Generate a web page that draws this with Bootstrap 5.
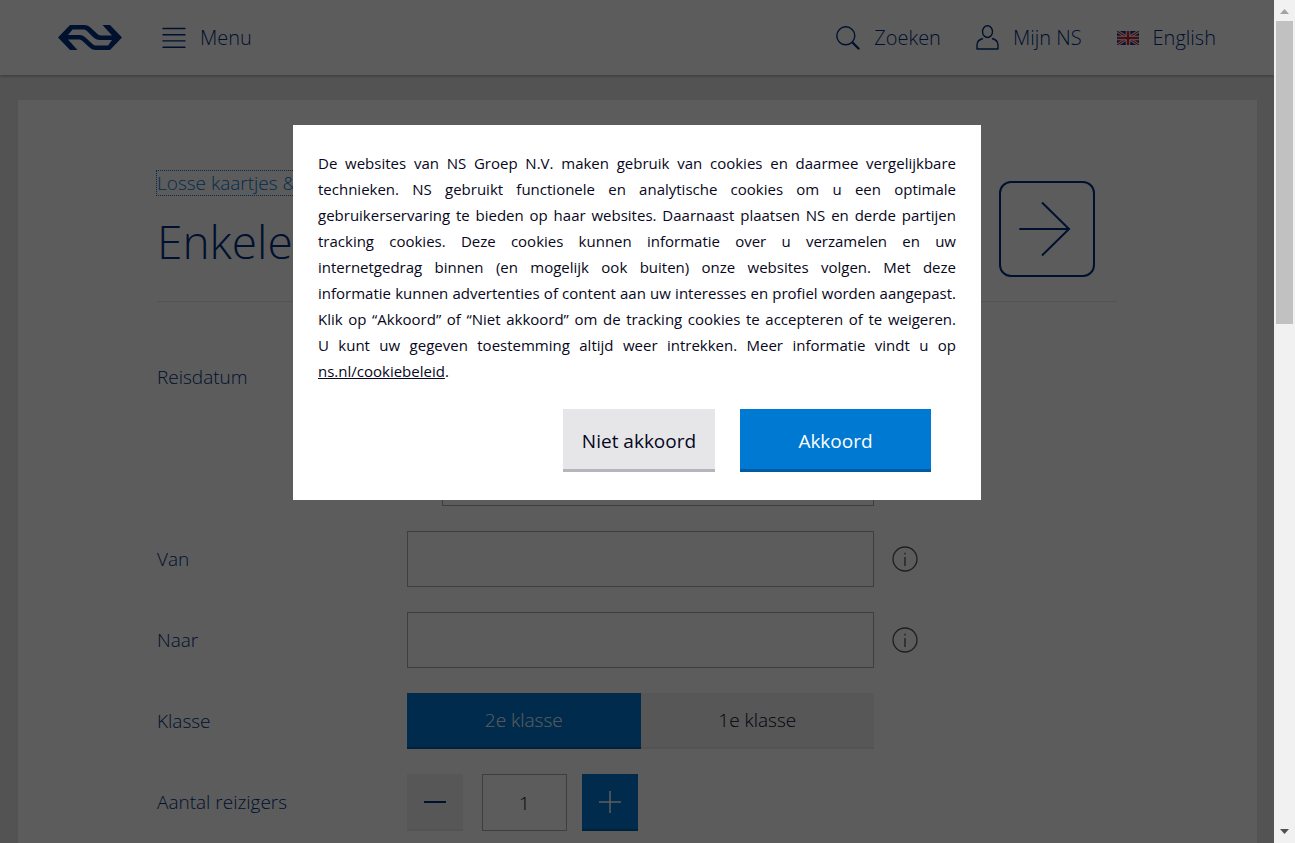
<!DOCTYPE html>
<html lang="nl">
<head>
<meta charset="utf-8">
<meta name="viewport" content="width=device-width, initial-scale=1">
<title>Enkele reis | NS</title>
<link href="https://cdn.jsdelivr.net/npm/bootstrap@5.3.0/dist/css/bootstrap.min.css" rel="stylesheet">
<style>
  :root { --ns-navy: #003082; --ns-blue: #0079d3; --ns-text: #070721; }
  body { font-family: "Open Sans", "Noto Sans", sans-serif; font-weight: 300; font-size: 19px; line-height: 26px; color: var(--ns-text); background: #e6e6e9; }
  svg { display: block; flex: none; }
  .site-header { height: 75px; padding: 0 58px; background: #fff; font-size: 20px; box-shadow: 0 2px 2px rgba(7,7,33,.2); }
  .site-header a { color: var(--ns-navy); text-decoration: none; }
  .main-links { gap: 40px; }
  .user-links { gap: 35px; }
  .icon-gap { gap: 14px; }
  .sheet { margin: 25px 17px 0 18px; background: #fff; padding: 70px 16px 0 15px; }
  .sheet-inner { max-width: 960px; margin: 0 auto; }
  .title-row { height: 132px; border-bottom: 1px solid #e6e6e9; }
  .crumb { color: var(--ns-blue); text-decoration: none; outline: 1px dotted var(--ns-blue); display: inline-block; line-height: 24px; }
  h1 { font-size: 46px; line-height: 60px; font-weight: 300; color: var(--ns-navy); margin: 15px 0 0; }
  .direction { margin: 11px 22px 0 0; width: 96px; height: 96px; padding: 0 4px 0 0; border: 2px solid var(--ns-navy); border-radius: 12px; background: #fff; color: var(--ns-navy); display: grid; place-items: center; }
  .ticket-form { padding-top: 47px; display: grid; gap: 25px; }
  .form-line { display: flex; align-items: flex-start; min-height: 56px; }
  .line-label { width: 250px; flex: none; line-height: 56px; color: var(--ns-navy); }
  .line-field { width: 467px; min-width: 0; }
  .date-field { padding: 101px 0 0 35px; }
  .ns-input { height: 56px; border: 1px solid #adadb3; border-radius: 0; font-size: 19px; font-weight: 300; color: var(--ns-text); }
  .info-btn { border: 0; padding: 0; background: none; color: #55555f; margin: 15px 0 0 18px; }
  .ns-choice { height: 56px; line-height: 54px; flex: 1; text-align: center; background: #f0f0f2; border-bottom: 2px solid #e6e6e9; }
  .btn-check:checked + .ns-choice { background: var(--ns-blue); color: #fff; border-color: #005ca0; }
  .step-btn { width: 56px; height: 57px; border: 0; padding: 0; display: grid; place-items: center; background: #f0f0f2; border-bottom: 2px solid #e6e6e9; color: var(--ns-navy); }
  .step-plus { background: var(--ns-blue); border-color: #005ca0; color: #fff; }
  .count-input { width: 85px; height: 57px; margin: 0 15px 0 19px; text-align: center; }
  .veil { position: absolute; inset: 0; background: rgba(0,0,0,.64); }
  .cookie-box { width: 688px; max-width: 100%; margin: 125px auto 0; padding: 25px 25px 28px; background: #fff; }
  .cookie-box p { font-size: 15px; font-weight: 400; line-height: 26px; text-align: justify; text-align-last: justify; margin: 0; }
  .cookie-box p.closing { text-align-last: left; margin-bottom: 25px; }
  .cookie-box p a { color: var(--ns-text); }
  .cookie-actions { gap: 25px; padding-right: 25px; }
  .cookie-btn { height: 63px; width: 152px; border: 0; border-bottom: 3px solid #b5b5be; background: #e6e6e9; color: var(--ns-text); font-size: 19px; padding: 4px 0 0; font-weight: 400; }
  .cookie-yes { width: 191px; background: var(--ns-blue); border-color: #005ca0; color: #fff; font-weight: 500; }
  .scroll-rail { width: 21px; flex: none; background: #f1f1f1; padding: 0 2px; }
  .scroll-rail svg { height: 21px; }
  .scroll-thumb { height: 36%; background: #c1c1c1; }
</style>
</head>
<body>
<div class="d-flex vh-100 overflow-hidden">
  <div class="flex-grow-1 position-relative overflow-hidden">
    <header class="site-header d-flex justify-content-between align-items-center position-relative">
      <nav class="main-links d-flex align-items-center" aria-label="Hoofdmenu">
        <a href="#" aria-label="NS">
          <svg width="64" height="25" viewBox="0 0 64 25"><path fill="#003082" d="M0 12.500 12 0H26C29 0 31 1 33 3L40 9.500C41 10.200 42 10.500 43 10.500H54L44.500 0H52L64 12.500 52 25H38C35 25 33 24 31 22L24.500 16C23 15 22 14.500 21 14.500H10L19.500 25H12ZM10 10H22C24 10 26 11 28 13L34.500 19C36 20 37 20.500 38 20.500H50L54 15H42C39 15 37 14 35 12L29 6C28 5 27 4.500 26 4.500H14.500Z"/></svg>
        </a>
        <a href="#" class="d-flex align-items-center icon-gap">
          <svg width="24" height="22" viewBox="0 0 24 22" stroke="currentColor" stroke-width="1.400" stroke-linecap="round"><path d="M1 1.500H23M1 7.700H23M1 13.900H23M1 20.200H23"/></svg>Menu</a>
      </nav>
      <nav class="user-links d-flex align-items-center" aria-label="Service">
        <a href="#" class="d-flex align-items-center icon-gap">
          <svg width="24" height="24" viewBox="0 0 24 24" fill="none" stroke="currentColor"><circle cx="9.800" cy="9.800" r="9" stroke-width="1.400"/><path stroke-width="2.400" stroke-linecap="round" d="M16.500 16.500 22.500 22.500"/></svg>Zoeken</a>
        <a href="#" class="d-flex align-items-center icon-gap">
          <svg width="23" height="25" viewBox="0 0 23 25" fill="none" stroke="currentColor" stroke-width="1.400"><ellipse cx="11.500" cy="6.600" rx="5" ry="5.900"/><path stroke-linejoin="round" d="M7 13.500C3 14.500 1 17 1 20V24H22V20C22 17 20 14.500 16 13.500"/></svg>Mijn NS</a>
        <a href="#" class="d-flex align-items-center icon-gap">
          <svg width="22" height="14" viewBox="0 0 22 14"><path fill="#20347c" d="M0 0h22v14H0z"/><path stroke="#fff" stroke-width="3" d="M0 0 22 14M22 0 0 14"/><path stroke="#d02034" stroke-width="1.200" d="M0 0 22 14M22 0 0 14"/><path stroke="#fff" stroke-width="4.500" d="M11 0V14M0 7H22"/><path stroke="#d02034" stroke-width="2.500" d="M11 0V14M0 7H22"/></svg>English</a>
      </nav>
    </header>

    <main class="sheet vh-100">
      <div class="sheet-inner">
        <div class="title-row d-flex justify-content-between">
          <div>
            <a href="#" class="crumb">Losse kaartjes &amp;</a>
            <h1>Enkele</h1>
          </div>
          <button type="button" class="direction" aria-label="Enkele reis">
            <svg width="52" height="56" viewBox="0 0 52 56" fill="none" stroke="currentColor" stroke-width="2"><path stroke-linecap="round" d="M1 28H50"/><path d="M23 1.500 50 28 23 54.500"/></svg>
          </button>
        </div>

        <form class="ticket-form">
          <div class="form-line">
            <label class="line-label" for="datum">Reisdatum</label>
            <div class="line-field date-field"><input id="datum" class="form-control ns-input" type="text"></div>
          </div>
          <div class="form-line">
            <label class="line-label" for="van">Van</label>
            <div class="line-field"><input id="van" class="form-control ns-input" type="text"></div>
            <button type="button" class="info-btn" aria-label="Informatie">
              <svg width="26" height="26" viewBox="0 0 26 26" fill="none" stroke="currentColor" stroke-width="1.300"><circle cx="13" cy="13" r="12"/><path d="M13 11V20M13 6.800V8.400"/></svg></button>
          </div>
          <div class="form-line">
            <label class="line-label" for="naar">Naar</label>
            <div class="line-field"><input id="naar" class="form-control ns-input" type="text"></div>
            <button type="button" class="info-btn" aria-label="Informatie">
              <svg width="26" height="26" viewBox="0 0 26 26" fill="none" stroke="currentColor" stroke-width="1.300"><circle cx="13" cy="13" r="12"/><path d="M13 11V20M13 6.800V8.400"/></svg></button>
          </div>
          <div class="form-line">
            <span class="line-label" id="klasse">Klasse</span>
            <div class="line-field d-flex" role="group" aria-labelledby="klasse">
              <input type="radio" class="btn-check" name="klasse" id="k2" checked><label class="ns-choice" for="k2">2e klasse</label>
              <input type="radio" class="btn-check" name="klasse" id="k1"><label class="ns-choice" for="k1">1e klasse</label>
            </div>
          </div>
          <div class="form-line">
            <label class="line-label" for="aantal">Aantal reizigers</label>
            <div class="line-field d-flex">
              <button type="button" class="step-btn" aria-label="Minder"><svg width="24" height="24" viewBox="0 0 24 24" stroke="currentColor" stroke-width="2"><path d="M1 12H23"/></svg></button>
              <input id="aantal" class="form-control ns-input count-input" type="text" value="1">
              <button type="button" class="step-btn step-plus" aria-label="Meer"><svg width="24" height="24" viewBox="0 0 24 24" stroke="currentColor" stroke-width="1.500"><path d="M1 12H23M12 1V23"/></svg></button>
            </div>
          </div>
        </form>
      </div>
    </main>

    <div class="veil">
      <div class="cookie-box" role="dialog" aria-label="Cookies">
        <p>De websites van NS Groep N.V. maken gebruik van cookies en daarmee vergelijkbare technieken. NS gebruikt functionele en analytische cookies om u een optimale gebruikerservaring te bieden op haar websites. Daarnaast plaatsen NS en derde partijen tracking cookies. Deze cookies kunnen informatie over u verzamelen en uw<br>
        internetgedrag binnen (en mogelijk ook buiten) onze websites volgen. Met deze<br>
        informatie kunnen advertenties of content aan uw interesses en profiel worden aangepast.<br>
        Klik op “Akkoord” of “Niet akkoord” om de tracking cookies te accepteren of te weigeren.<br>
        U kunt uw gegeven toestemming altijd weer intrekken. Meer informatie vindt u op</p>
        <p class="closing"><a href="#">ns.nl/cookiebeleid</a>.</p>
        <div class="cookie-actions d-flex justify-content-end">
          <button type="button" class="cookie-btn">Niet akkoord</button>
          <button type="button" class="cookie-btn cookie-yes">Akkoord</button>
        </div>
      </div>
    </div>
  </div>
  <div class="scroll-rail d-flex flex-column" aria-hidden="true">
    <svg width="17" height="21" viewBox="0 0 17 21"><path fill="#a3a3a3" d="M4 14 8.500 9 13 14Z"/></svg>
    <div class="scroll-thumb"></div>
    <svg class="mt-auto" width="17" height="21" viewBox="0 0 17 21"><path fill="#505050" d="M4 7 8.500 12 13 7Z"/></svg>
  </div>
</div>
<script src="https://cdn.jsdelivr.net/npm/bootstrap@5.3.0/dist/js/bootstrap.bundle.min.js"></script>
</body>
</html>
